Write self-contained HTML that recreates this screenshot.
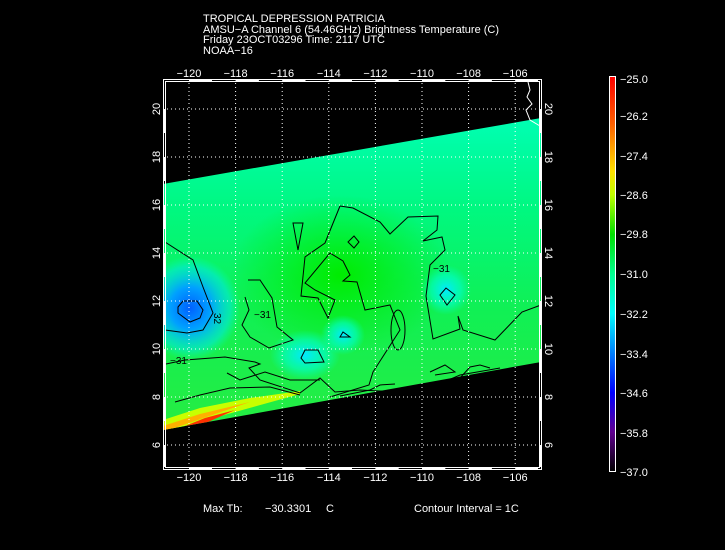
<!DOCTYPE html>
<html><head><style>
html,body{margin:0;padding:0;background:#000;width:725px;height:550px;overflow:hidden}
svg{display:block}
text{font-family:"Liberation Sans",sans-serif;fill:#fff}
</style></head><body>
<svg width="725" height="550" viewBox="0 0 725 550" xmlns="http://www.w3.org/2000/svg">
<defs>
<linearGradient id="sw" x1="0" y1="0" x2="0" y2="1">
<stop offset="0" stop-color="#00ffb8"/>
<stop offset="0.3" stop-color="#00f880"/>
<stop offset="0.6" stop-color="#10f055"/>
<stop offset="1" stop-color="#28ec40"/>
</linearGradient>
<radialGradient id="b1"><stop offset="0" stop-color="#0060ff"/><stop offset="0.4" stop-color="#00a0ff"/><stop offset="0.8" stop-color="#00e8e0" stop-opacity="0.6"/><stop offset="1" stop-color="#00ffc0" stop-opacity="0"/></radialGradient>
<radialGradient id="b2"><stop offset="0" stop-color="#00e8ff"/><stop offset="0.6" stop-color="#00ffd0" stop-opacity="0.6"/><stop offset="1" stop-color="#00ffc0" stop-opacity="0"/></radialGradient>
<radialGradient id="g1"><stop offset="0" stop-color="#00ec00"/><stop offset="1" stop-color="#00ec00" stop-opacity="0"/></radialGradient>
<linearGradient id="cb" x1="0" y1="0" x2="0" y2="1">
<stop offset="0" stop-color="#ff0000"/>
<stop offset="0.12" stop-color="#ff6000"/>
<stop offset="0.24" stop-color="#ffe000"/>
<stop offset="0.3" stop-color="#c0ff00"/>
<stop offset="0.4" stop-color="#00e000"/>
<stop offset="0.5" stop-color="#00ff90"/>
<stop offset="0.6" stop-color="#00ffff"/>
<stop offset="0.7" stop-color="#0080ff"/>
<stop offset="0.8" stop-color="#0000ff"/>
<stop offset="0.9" stop-color="#600090"/>
<stop offset="1" stop-color="#000000"/>
</linearGradient>
<clipPath id="swc"><polygon points="163,184 541,118 541,362 163,430"/></clipPath>
</defs>

<text x="203" y="22" font-size="11">TROPICAL DEPRESSION PATRICIA</text>
<text x="203" y="33" font-size="11">AMSU−A Channel 6 (54.46GHz) Brightness Temperature (C)</text>
<text x="203" y="43" font-size="11">Friday 23OCT03296 Time: 2117 UTC</text>
<text x="203" y="54" font-size="11">NOAA−16</text>

<g clip-path="url(#swc)">
<rect x="163" y="110" width="380" height="330" fill="url(#sw)"/>
<ellipse cx="340" cy="275" rx="110" ry="80" fill="url(#g1)"/>
<ellipse cx="190" cy="308" rx="50" ry="52" fill="url(#b1)"/>
<ellipse cx="305" cy="355" rx="35" ry="25" fill="url(#b2)"/>
<ellipse cx="343" cy="335" rx="22" ry="20" fill="url(#b2)"/>
<ellipse cx="446" cy="290" rx="25" ry="25" fill="url(#b2)"/>
<polygon points="163,420 200,408 250,398 300,391 300,394 163,432" fill="#c8ff00"/>
<polygon points="163,426 200,414 250,402 163,432" fill="#ffb000"/>
<polygon points="180,428 205,418 235,410 190,430" fill="#ff3000"/>
</g>

<g fill="none" stroke="#000" stroke-width="1">
<polyline points="165,242 193,260 203,287 213,313 203,330 187,333 165,330"/>
<polygon points="178,307 183,301 197,301 203,310 200,318 190,322 178,313"/>
<polyline points="340,206 353,208 380,222 390,234 408,217 438,216 437,230 423,241 442,237 445,250 430,265 426,296 433,339 460,329 458,316 463,330 495,340 522,312 541,305"/>
<polyline points="340,206 325,243 305,257 301,296 318,298 328,318 335,300 315,290 305,283 330,253 343,261 350,275 343,281 357,282 365,310 390,305 400,330 373,372 369,385 330,397"/>
<polygon points="293,223 298,250 303,223"/>
<polygon points="348,242 354,236 359,242 354,248"/>
<polygon points="440,295 446,288 455,295 447,305"/>
<ellipse cx="398" cy="330" rx="7" ry="20"/>
<polygon points="301,358 305,350 318,350 324,362 305,363"/>
<polygon points="340,337 343,332 350,337"/>
<polyline points="248,280 260,280 272,298 277,327 293,340 269,348 250,337 242,325 249,310 245,297"/>
<polyline points="166,364 185,360 225,357 255,362 260,364 249,368 260,380 300,393 320,378 335,392 360,390 400,392 430,388 460,375 500,368"/>
<polyline points="227,373 240,380 265,372 290,380 320,380"/>
<polyline points="175,402 200,395 230,388 270,387 300,395"/>
<polyline points="340,396 370,390 380,385 395,384"/>
<polyline points="430,372 445,365 455,372 435,375"/>
<polyline points="460,378 470,367 480,365 490,368"/>
</g>
<g font-size="10">
<text x="214" y="313" style="fill:#000" transform="rotate(90 214 313)">32</text>
<text x="254" y="318" style="fill:#000">−31</text>
<text x="170" y="364" style="fill:#000">−31</text>
<text x="433" y="272" style="fill:#000">−31</text>
</g>

<polyline points="528,82 530,90 527,97 532,104 526,110 530,120 540,126" fill="none" stroke="#fff" stroke-width="1"/>

<g stroke="#fff" stroke-width="1" stroke-dasharray="1,3">
<line x1="189" y1="79" x2="189" y2="469"/><line x1="235.6" y1="79" x2="235.6" y2="469"/>
<line x1="282.2" y1="79" x2="282.2" y2="469"/><line x1="328.8" y1="79" x2="328.8" y2="469"/>
<line x1="375.4" y1="79" x2="375.4" y2="469"/><line x1="422" y1="79" x2="422" y2="469"/>
<line x1="468.6" y1="79" x2="468.6" y2="469"/><line x1="515.2" y1="79" x2="515.2" y2="469"/>
<line x1="163" y1="109" x2="541" y2="109"/><line x1="163" y1="157" x2="541" y2="157"/>
<line x1="163" y1="205" x2="541" y2="205"/><line x1="163" y1="253" x2="541" y2="253"/>
<line x1="163" y1="301" x2="541" y2="301"/><line x1="163" y1="349" x2="541" y2="349"/>
<line x1="163" y1="397" x2="541" y2="397"/><line x1="163" y1="445" x2="541" y2="445"/>
</g>

<rect x="163.5" y="79.5" width="378" height="390" fill="none" stroke="#fff"/>
<rect x="165.5" y="81.5" width="374" height="386" fill="none" stroke="#fff"/>
<g stroke="#fff" stroke-width="3">
<line x1="189" y1="80.5" x2="212" y2="80.5"/><line x1="235.6" y1="80.5" x2="258.9" y2="80.5"/><line x1="282.2" y1="80.5" x2="305.5" y2="80.5"/><line x1="328.8" y1="80.5" x2="352" y2="80.5"/><line x1="375.4" y1="80.5" x2="398.7" y2="80.5"/><line x1="422" y1="80.5" x2="445.3" y2="80.5"/><line x1="468.6" y1="80.5" x2="491.9" y2="80.5"/><line x1="515.2" y1="80.5" x2="538" y2="80.5"/>
<line x1="189" y1="468.5" x2="212" y2="468.5"/><line x1="235.6" y1="468.5" x2="258.9" y2="468.5"/><line x1="282.2" y1="468.5" x2="305.5" y2="468.5"/><line x1="328.8" y1="468.5" x2="352" y2="468.5"/><line x1="375.4" y1="468.5" x2="398.7" y2="468.5"/><line x1="422" y1="468.5" x2="445.3" y2="468.5"/><line x1="468.6" y1="468.5" x2="491.9" y2="468.5"/><line x1="515.2" y1="468.5" x2="538" y2="468.5"/>
<line x1="164.5" y1="109" x2="164.5" y2="133"/><line x1="164.5" y1="157" x2="164.5" y2="181"/><line x1="164.5" y1="205" x2="164.5" y2="229"/><line x1="164.5" y1="253" x2="164.5" y2="277"/><line x1="164.5" y1="301" x2="164.5" y2="325"/><line x1="164.5" y1="349" x2="164.5" y2="373"/><line x1="164.5" y1="397" x2="164.5" y2="421"/><line x1="164.5" y1="445" x2="164.5" y2="467"/>
<line x1="540.5" y1="109" x2="540.5" y2="133"/><line x1="540.5" y1="157" x2="540.5" y2="181"/><line x1="540.5" y1="205" x2="540.5" y2="229"/><line x1="540.5" y1="253" x2="540.5" y2="277"/><line x1="540.5" y1="301" x2="540.5" y2="325"/><line x1="540.5" y1="349" x2="540.5" y2="373"/><line x1="540.5" y1="397" x2="540.5" y2="421"/><line x1="540.5" y1="445" x2="540.5" y2="467"/>
</g>

<g font-size="11" text-anchor="middle">
<text x="189" y="77">−120</text><text x="235.6" y="77">−118</text><text x="282.2" y="77">−116</text><text x="328.8" y="77">−114</text><text x="375.4" y="77">−112</text><text x="422" y="77">−110</text><text x="468.6" y="77">−108</text><text x="515.2" y="77">−106</text>
<text x="189" y="481">−120</text><text x="235.6" y="481">−118</text><text x="282.2" y="481">−116</text><text x="328.8" y="481">−114</text><text x="375.4" y="481">−112</text><text x="422" y="481">−110</text><text x="468.6" y="481">−108</text><text x="515.2" y="481">−106</text>
</g>
<g font-size="11" text-anchor="middle">
<text transform="translate(160,109) rotate(-90)">20</text><text transform="translate(160,157) rotate(-90)">18</text><text transform="translate(160,205) rotate(-90)">16</text><text transform="translate(160,253) rotate(-90)">14</text><text transform="translate(160,301) rotate(-90)">12</text><text transform="translate(160,349) rotate(-90)">10</text><text transform="translate(160,397) rotate(-90)">8</text><text transform="translate(160,445) rotate(-90)">6</text>
<text transform="translate(545,109) rotate(90)">20</text><text transform="translate(545,157) rotate(90)">18</text><text transform="translate(545,205) rotate(90)">16</text><text transform="translate(545,253) rotate(90)">14</text><text transform="translate(545,301) rotate(90)">12</text><text transform="translate(545,349) rotate(90)">10</text><text transform="translate(545,397) rotate(90)">8</text><text transform="translate(545,445) rotate(90)">6</text>
</g>

<rect x="609.5" y="76.5" width="6" height="395" fill="url(#cb)" stroke="#fff"/>
<g font-size="11">
<text x="620" y="83">−25.0</text><text x="620" y="120">−26.2</text><text x="620" y="160">−27.4</text><text x="620" y="199">−28.6</text><text x="620" y="238">−29.8</text><text x="620" y="278">−31.0</text><text x="620" y="318">−32.2</text><text x="620" y="358">−33.4</text><text x="620" y="397">−34.6</text><text x="620" y="437">−35.8</text><text x="620" y="476">−37.0</text>
</g>

<text x="203" y="512" font-size="11">Max Tb:</text>
<text x="265" y="512" font-size="11">−30.3301</text>
<text x="326" y="512" font-size="11">C</text>
<text x="414" y="512" font-size="11">Contour Interval = 1C</text>
</svg>
</body></html>
